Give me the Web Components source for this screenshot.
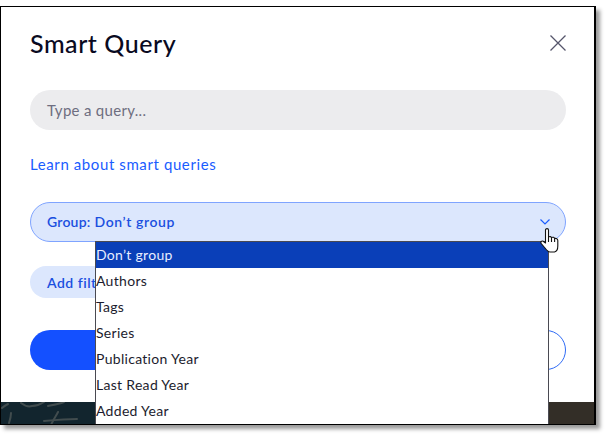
<!DOCTYPE html>
<html>
<head>
<meta charset="utf-8">
<title>Smart Query</title>
<style>
  html, body { margin: 0; padding: 0; background: #fff; }
  body { font-family: "Lato", "Open Sans", sans-serif; min-height: 435px; overflow: hidden; }
</style>
</head>
<body>
<sq-frame>
  <sq-dialog>
    <sq-header>Smart Query</sq-header>
    <sq-input placeholder="Type a query..."></sq-input>
    <sq-link>Learn about smart queries</sq-link>
    <sq-select label="Group:" value="Don’t group"></sq-select>
    <sq-chip>Add filter</sq-chip>
    <sq-actions></sq-actions>
  </sq-dialog>
  <sq-menu></sq-menu>
  <sq-cursor></sq-cursor>
</sq-frame>

<script>
class SqFrame extends HTMLElement {
    constructor() {
        super();
        this.attachShadow({ mode: 'open' });
        this.shadowRoot.innerHTML = `
            <style>
                :host {
                    display: block;
                    position: relative;
                    box-sizing: border-box;
                    width: 596px;
                    height: 419px;
                    margin-top: 6px;
                    border: 1px solid #000;
                    border-right-width: 2px;
                    background: #fff;
                    box-shadow: 4px 4px 4px rgba(0, 0, 0, 0.4);
                }
                .wrap {
                    display: flex;
                    flex-direction: column;
                    height: 100%;
                }
                .strip {
                    flex: none;
                    height: 22px;
                    background: linear-gradient(90deg, #12252e 0%, #12252e 45%, #332e27 90%);
                    overflow: hidden;
                }
                svg { display: block; }
            </style>
            <div class="wrap">
                <slot></slot>
                <!-- background image peeking out under the dialog -->
                <div class="strip">
                    <svg width="94" height="22" fill="none" stroke="#414c4e" stroke-width="2" stroke-linecap="round">
                        <path d="M1 6 C3 4 5 3 7 2"/>
                        <path d="M10 11 C10 15 9 18 8 21"/>
                        <path d="M20 1 C24 4 28 5 31 4 C35 4 40 2 43 0"/>
                        <path d="M47 4 C52 3 58 2 63 0"/>
                        <path d="M43 19 C54 18 66 17 76 17"/>
                        <path d="M57 10 C55 14 52 18 50 23"/>
                    </svg>
                </div>
            </div>
        `;
    }
}

class SqDialog extends HTMLElement {
    constructor() {
        super();
        this.attachShadow({ mode: 'open' });
        this.shadowRoot.innerHTML = `
            <style>
                :host {
                    display: flex;
                    flex-direction: column;
                    flex: 1;
                    min-height: 0;
                    padding: 0 28px 0 29px;
                    overflow: hidden;
                }
            </style>
            <slot></slot>
        `;
    }
}

class SqHeader extends HTMLElement {
    constructor() {
        super();
        this.attachShadow({ mode: 'open' });
        this.shadowRoot.innerHTML = `
            <style>
                :host {
                    display: flex;
                    flex: none;
                    align-items: center;
                    justify-content: space-between;
                    box-sizing: border-box;
                    height: 83px;
                    padding-bottom: 11px;
                    font-size: 25px;
                    font-weight: 500;
                    color: #0a0a1f;
                    letter-spacing: 0.55px;
                }
                svg { display: block; }
            </style>
            <slot></slot>
            <svg width="16" height="16" viewBox="0 0 16 16" fill="none" stroke="#55556b" stroke-width="1.3">
                <path d="M0.5 0.5 L15.5 15.5 M15.5 0.5 L0.5 15.5"/>
            </svg>
        `;
    }
}

class SqInput extends HTMLElement {
    constructor() {
        super();
        this.attachShadow({ mode: 'open' });
        this.shadowRoot.innerHTML = `
            <style>
                :host {
                    display: flex;
                    align-items: center;
                    flex: none;
                    height: 40px;
                    padding: 0 17px;
                    border-radius: 20px;
                    background: #ececee;
                    color: #6e6e80;
                    font-size: 15px;
                    letter-spacing: 0.3px;
                }
            </style>
            <span></span>
        `;
        this.shadowRoot.querySelector('span').textContent = this.getAttribute('placeholder');
    }
}

class SqLink extends HTMLElement {
    constructor() {
        super();
        this.attachShadow({ mode: 'open' });
        this.shadowRoot.innerHTML = `
            <style>
                :host {
                    display: block;
                    flex: none;
                    margin-top: 24px;
                    height: 20px;
                    line-height: 20px;
                    font-size: 15px;
                    color: #1a5cff;
                    letter-spacing: 0.6px;
                }
            </style>
            <slot></slot>
        `;
    }
}

class SqSelect extends HTMLElement {
    constructor() {
        super();
        this.attachShadow({ mode: 'open' });
        this.shadowRoot.innerHTML = `
            <style>
                :host {
                    display: flex;
                    flex: none;
                    align-items: center;
                    box-sizing: border-box;
                    height: 40px;
                    margin-top: 28px;
                    padding: 0 15px 2px 16px;
                    border: 1px solid #7fa4ff;
                    border-radius: 20px;
                    background: #dce7fd;
                    color: #1a4fe0;
                    font-size: 14px;
                    font-weight: 600;
                    gap: 4px;
                }
                .label { letter-spacing: 0.2px; }
                .value { flex: 1; letter-spacing: 0.6px; }
                svg { display: block; margin-top: 2px; }
            </style>
            <span class="label"></span>
            <span class="value"></span>
            <svg width="10" height="6" viewBox="0 0 10 6" fill="none" stroke="#1a5cff" stroke-width="1.2">
                <path d="M0.5 0.5 L5 5 L9.5 0.5"/>
            </svg>
        `;
        this.shadowRoot.querySelector('.label').textContent = this.getAttribute('label');
        this.shadowRoot.querySelector('.value').textContent = this.getAttribute('value');
    }
}

class SqChip extends HTMLElement {
    constructor() {
        super();
        this.attachShadow({ mode: 'open' });
        this.shadowRoot.innerHTML = `
            <style>
                :host {
                    display: flex;
                    flex: none;
                    align-items: center;
                    align-self: flex-start;
                    box-sizing: border-box;
                    height: 32px;
                    margin-top: 24px;
                    padding: 0 17px;
                    border-radius: 16px;
                    background: #dce7fd;
                    color: #1a4fe0;
                    font-size: 14px;
                    font-weight: 600;
                    letter-spacing: 0.5px;
                }
            </style>
            <slot></slot>
        `;
    }
}

class SqActions extends HTMLElement {
    constructor() {
        super();
        this.attachShadow({ mode: 'open' });
        this.shadowRoot.innerHTML = `
            <style>
                :host {
                    display: flex;
                    flex: none;
                    gap: 12px;
                    margin-top: 32px;
                }
                div {
                    flex: 1;
                    box-sizing: border-box;
                    height: 40px;
                    border-radius: 20px;
                }
                .primary { background: #1450ff; }
                .secondary { border: 1.5px solid #2f6bf5; background: #fff; }
            </style>
            <div class="primary"></div>
            <div class="secondary"></div>
        `;
    }
}

class SqMenu extends HTMLElement {
    constructor() {
        super();
        this.attachShadow({ mode: 'open' });
        const items = ['Don’t group', 'Authors', 'Tags', 'Series', 'Publication Year', 'Last Read Year', 'Added Year'];
        this.shadowRoot.innerHTML = `
            <style>
                :host {
                    display: block;
                    position: absolute;
                    left: 94px;
                    top: 234px;
                    width: 454px;
                    height: 183px;
                    box-sizing: border-box;
                    border: 1px solid #4a4a52;
                    border-bottom: 0;
                    background: #fff;
                    color: #1c1c2e;
                    font-size: 14px;
                    letter-spacing: 0.3px;
                }
                div {
                    height: 26px;
                    line-height: 26px;
                    white-space: nowrap;
                }
                .active { background: #0a3fb8; color: #e8eeff; }
            </style>
            ${items.map((t, i) => `<div class="${i === 0 ? 'active' : ''}">${t}</div>`).join('')}
        `;
    }
}

class SqCursor extends HTMLElement {
    constructor() {
        super();
        this.attachShadow({ mode: 'open' });
        this.shadowRoot.innerHTML = `
            <style>
                :host {
                    display: block;
                    position: absolute;
                    left: 539px;
                    top: 221px;
                    width: 19px;
                    height: 25px;
                }
                svg { display: block; }
            </style>
            <svg width="19" height="25" viewBox="0 0 19 25" fill="#fff" stroke="#111" stroke-width="1.1" stroke-linejoin="round">
                <path d="M5.5 2 C5.5 0.2 8.5 0.2 8.5 2 V9 C10 8.2 11 8.6 11.5 9.6 C13 8.8 14.2 9.4 14.6 10.6 C16.2 10 17.8 10.8 17.8 12.6 V18 C17.8 21 16.5 23.5 14.5 24 H10 C8 24 6.5 22 5 20 L1.2 15.5 C0.2 14 1.8 12.4 3.2 13.2 L5.5 15 Z"/>
                <path d="M8.5 9 V14 M11.5 9.6 V14 M14.6 10.6 V14" fill="none"/>
            </svg>
        `;
    }
}

customElements.define('sq-frame', SqFrame);
customElements.define('sq-dialog', SqDialog);
customElements.define('sq-header', SqHeader);
customElements.define('sq-input', SqInput);
customElements.define('sq-link', SqLink);
customElements.define('sq-select', SqSelect);
customElements.define('sq-chip', SqChip);
customElements.define('sq-actions', SqActions);
customElements.define('sq-menu', SqMenu);
customElements.define('sq-cursor', SqCursor);
</script>
</body>
</html>
